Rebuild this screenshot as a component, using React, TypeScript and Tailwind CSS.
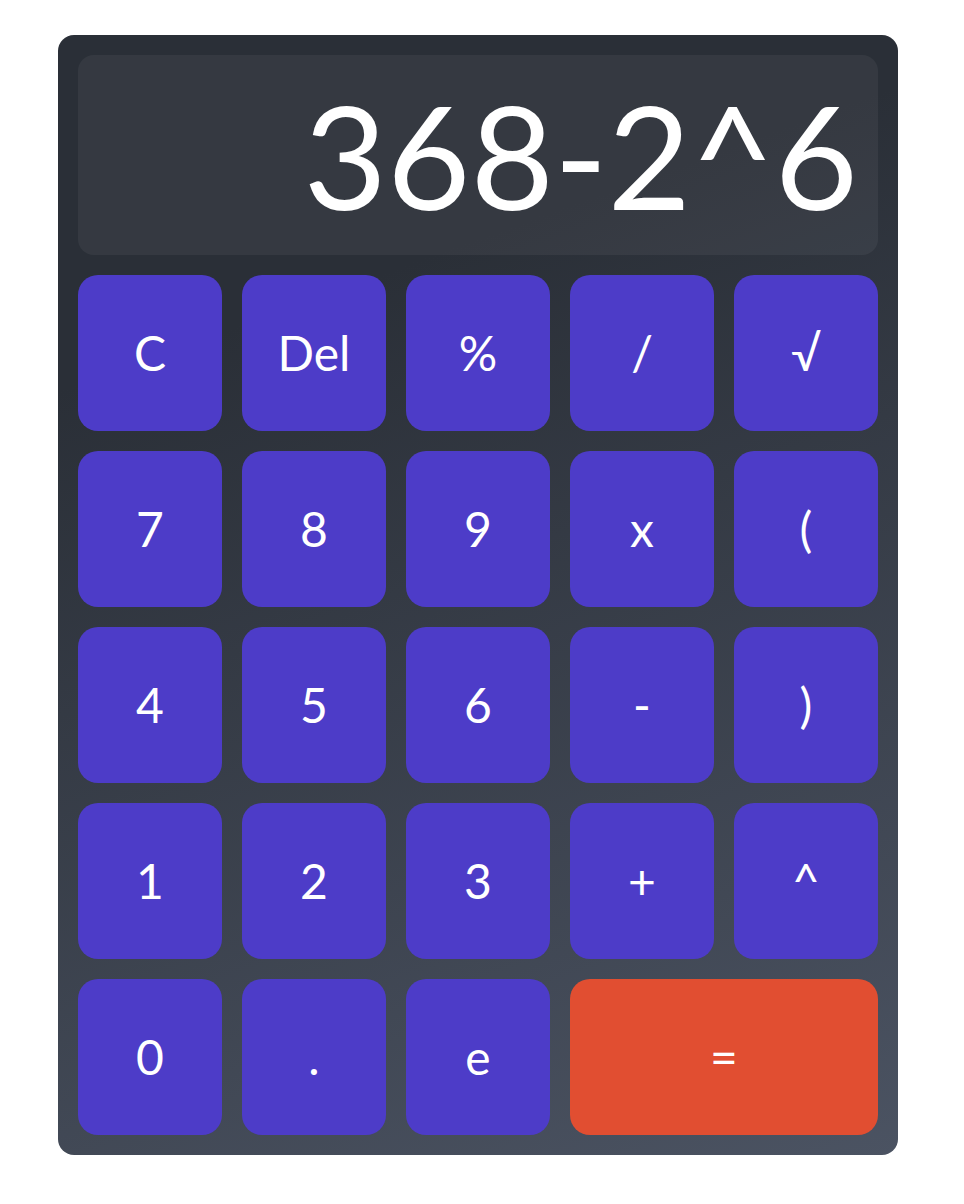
const keys = [
  "C", "Del", "%", "/", "√",
  "7", "8", "9", "x", "(",
  "4", "5", "6", "-", ")",
  "1", "2", "3", "+", "^",
  "0", ".", "e",
];

function Key({ label, wide }: { label: string; wide?: boolean }) {
  return (
    <button
      className={
        wide
          ? "col-span-2 h-[156px] rounded-[20px] bg-[#e14e31] text-white text-5xl flex items-center justify-center"
          : "h-[156px] rounded-[20px] bg-[#4d3cc8] text-white text-5xl flex items-center justify-center"
      }
    >
      {label}
    </button>
  );
}

export default function App() {
  return (
    <div className="w-full min-h-screen bg-white pt-[35px] pl-[58px] font-['Lato',sans-serif]">
      <div className="w-[840px] rounded-2xl p-5 flex flex-col gap-5 bg-[linear-gradient(160deg,#2a2f37_25%,#4b5362_100%)]">
        <div className="h-[200px] rounded-2xl bg-white/5 flex items-center justify-end px-5">
          <span className="text-white text-[144px] leading-none">368-2^6</span>
        </div>
        <div className="grid grid-cols-5 gap-5">
          {keys.map((k) => (
            <Key key={k} label={k} />
          ))}
          <Key label="=" wide />
        </div>
      </div>
    </div>
  );
}
